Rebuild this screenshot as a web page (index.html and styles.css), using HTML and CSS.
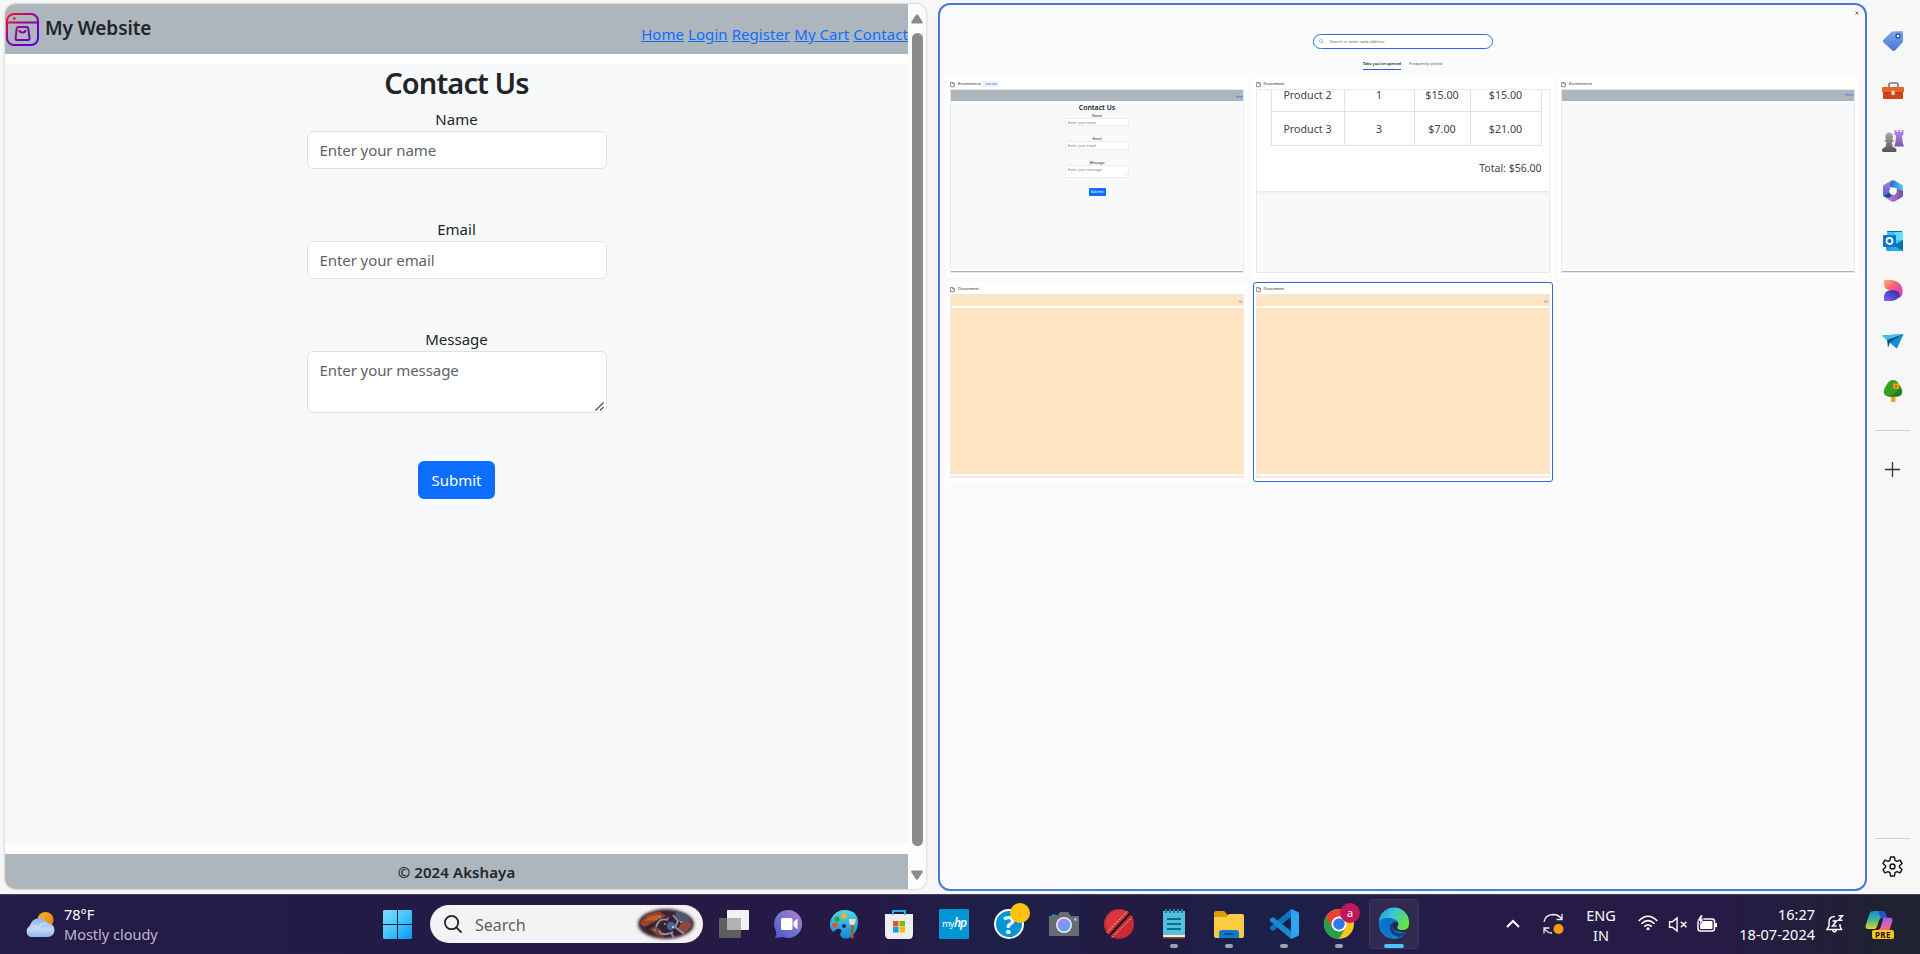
FILE: index.html
```html
<!DOCTYPE html>
<html lang="en">
<head>
<meta charset="utf-8">
<title>Ecommerce</title>
<link rel="stylesheet" href="styles.css">
</head>
<body>
<div class="browser">
  <section class="window">
    <div class="page">
      <header class="site-header">
        <div class="brand">
          <svg class="logo" viewBox="0 0 33 33" fill="none" stroke="url(#lg)" stroke-width="2">
            <defs><linearGradient id="lg" gradientUnits="userSpaceOnUse" x1="2" y1="2" x2="28" y2="30"><stop offset="0" stop-color="#ff1030"/><stop offset=".5" stop-color="#9000a0"/><stop offset="1" stop-color="#5000e0"/></linearGradient></defs>
            <rect x="1" y="1" width="31" height="31" rx="7"/><path d="M1 9.5h31.01M7 5.5h2.5"/><path d="M12.500 14h8q1.600 0 1.800 1.600l1.200 9.400q.2 2-1.700 2H11.300q-1.900 0-1.700-2l1.100-9.400Q11 14 12.500 14zM13.500 17q0 2.600 3 2.600t3-2.600"/>
          </svg>
          <span class="brand-name">My Website</span>
        </div>
        <nav class="links"><a>Home</a> <a>Login</a> <a>Register</a> <a>My Cart</a> <a>Contact</a></nav>
      </header>
      <main class="contact">
        <h2>Contact Us</h2>
        <label>Name</label>
        <div class="field">Enter your name</div>
        <label>Email</label>
        <div class="field">Enter your email</div>
        <label>Message</label>
        <div class="field area">Enter your message
          <svg class="grip" viewBox="0 0 10 10" stroke="#555" stroke-width="1.500"><path d="M.5 9.500l9-9M5.500 9.500l4-4"/></svg>
        </div>
        <button class="submit">Submit</button>
      </main>
      <footer class="site-footer">© 2024 Akshaya</footer>
    </div>
    <div class="scrollbar">
      <svg viewBox="0 0 12 10" fill="#8b8b8b"><path d="M5 .8q1-1.300 2 0l4.600 7q.8 1.700-.8 1.700H1.200q-1.600 0-.8-1.700z"/></svg>
      <div class="thumb"></div>
      <svg viewBox="0 0 12 10" fill="#8b8b8b"><path d="M5 9.200q1 1.300 2 0l4.600-7q.8-1.700-.8-1.700H1.200q-1.600 0-.8 1.700z"/></svg>
    </div>
  </section>

  <section class="picker">
    <div class="close"><svg viewBox="0 0 4 4" stroke="#555" stroke-width=".8"><path d="M.5.5l3 3M3.500.5l-3 3"/></svg></div>
    <div class="omnibox"><svg viewBox="0 0 5 5" fill="none" stroke="#777" stroke-width=".5"><circle cx="2" cy="2" r="1.600"/><path d="M3.200 3.200L4.700 4.700"/></svg>Search or enter web address</div>
    <div class="tabs"><span class="tab on">Tabs you've opened</span><span class="tab">Frequently visited</span></div>
    <div class="cards">
      <article class="card">
        <div class="cap"><svg class="doc" viewBox="0 0 5 5"><path d="M.6.4h2.200L4.400 2v2.700H.6zM2.800.4V2h1.600"/></svg>Ecommerce<span class="badge">Last tab</span></div>
        <div class="shot">
          <div class="s-head low">Hom</div>
          <div class="s-main">
            <b>Contact Us</b>
            <i>Name</i><p>Enter your name</p>
            <i>Email</i><p>Enter your email</p>
            <i>Message</i><p class="tall">Enter your message<svg viewBox="0 0 10 10" stroke="#777"><path d="M1 9l8-8M5 9l4-4"/></svg></p>
            <span class="s-btn">Submit</span>
          </div>
          <div class="s-foot"></div>
        </div>
      </article>
      <article class="card">
        <div class="cap"><svg class="doc" viewBox="0 0 5 5"><path d="M.6.4h2.200L4.400 2v2.700H.6zM2.800.4V2h1.600"/></svg>Document</div>
        <div class="shot cart">
          <div class="sheet">
            <div class="order">
              <span>Product 2</span><span>1</span><span>$15.00</span><span>$15.00</span>
              <span>Product 3</span><span>3</span><span>$7.00</span><span>$21.00</span>
            </div>
            <div class="total">Total: $56.00</div>
          </div>
        </div>
      </article>
      <article class="card">
        <div class="cap"><svg class="doc" viewBox="0 0 5 5"><path d="M.6.4h2.200L4.400 2v2.700H.6zM2.800.4V2h1.600"/></svg>Ecommerce</div>
        <div class="shot"><div class="s-head">Home</div><div class="s-main"></div><div class="s-foot"></div></div>
      </article>
      <article class="card">
        <div class="cap"><svg class="doc" viewBox="0 0 5 5"><path d="M.6.4h2.200L4.400 2v2.700H.6zM2.800.4V2h1.600"/></svg>Document</div>
        <div class="shot peach"><div class="s-head low">Ho</div><div class="s-main"></div><div class="s-foot"></div></div>
      </article>
      <article class="card selected">
        <div class="cap"><svg class="doc" viewBox="0 0 5 5"><path d="M.6.4h2.200L4.400 2v2.700H.6zM2.800.4V2h1.600"/></svg>Document</div>
        <div class="shot peach"><div class="s-head low">Ho</div><div class="s-main"></div><div class="s-foot"></div></div>
      </article>
    </div>
  </section>

  <aside class="sidebar">
    <svg class="app" viewBox="0 0 22 22"><defs><linearGradient id="tg" x1="0" y1="0" x2="0" y2="1"><stop offset="0" stop-color="#7fa8ef"/><stop offset="1" stop-color="#4672d2"/></linearGradient></defs><path d="M11 1.500L19.500 1q1.500 0 1.500 1.500V11q0 1-.8 1.800l-7 7.500q-1.500 1.500-3 0L1.500 12.500q-1.200-1.500 0-2.700L9 2.500q.8-1 2-1z" fill="url(#tg)"/><circle cx="16" cy="6" r="2" fill="#fff" stroke="#234a9f" stroke-width="1.300"/></svg>
    <svg class="app" viewBox="0 0 22 22"><path d="M7 8V5q0-2 2-2h5q2 0 2 2v3" fill="none" stroke="#777" stroke-width="1.600"/><rect x="1" y="8" width="20" height="11" rx="1" fill="#cd4518"/><path d="M0 8q0-1 1-1h20q1 0 1 1v4H0z" fill="#ec622c"/><path d="M1 12h20v1H1z" fill="#bd3c13"/><rect x="9.300" y="10.500" width="3.600" height="4.500" rx="1.500" fill="#d7d9da"/></svg>
    <svg class="app" viewBox="0 0 22 22"><defs><linearGradient id="pg" x1="0" y1="0" x2="0" y2="1"><stop offset="0" stop-color="#aaa"/><stop offset="1" stop-color="#555"/></linearGradient><linearGradient id="rk" x1="0" y1="0" x2="0" y2="1"><stop offset="0" stop-color="#bd8be9"/><stop offset="1" stop-color="#7d55b2"/></linearGradient></defs><path d="M12.500 0h2v2h1.500V0h2v2h1.500V0h2v4.500l-1.500 1.500.8 7 1.200 3.500h-10l1.300-3.500.8-7-1.600-1.500z" fill="url(#rk)"/><path d="M7 2.500a4 4 0 0 1 3 6.700q2 .6 2 2.300L9.800 12l1 5q3.700.8 3.700 3v.8q0 1.200-1.500 1.200H1.500Q0 22 0 20.500q0-2.800 3.500-3.500l1-5-2-.5q0-1.700 1.800-2.300A4 4 0 0 1 7 2.500z" fill="url(#pg)"/></svg>
    <svg class="app" viewBox="0 0 22 22"><defs><linearGradient id="m1" x1="0" y1="0" x2="0" y2="1"><stop offset="0" stop-color="#b07be0"/><stop offset="1" stop-color="#3f6fd6"/></linearGradient><linearGradient id="m2" x1="0" y1="0" x2="1" y2="0"><stop offset="0" stop-color="#2368c4"/><stop offset="1" stop-color="#4fd0fa"/></linearGradient><linearGradient id="m3" x1="0" y1="0" x2="1" y2="0"><stop offset="0" stop-color="#c293e8"/><stop offset="1" stop-color="#6f4fa0"/></linearGradient></defs><path d="M9 .8q2-1.200 4 0l6.500 3.700Q21 5.300 21 7v5l-7-4-6-1V4q0-2 1-3.200z" fill="url(#m2)"/><path d="M9 .8L2.500 4.500Q1 5.300 1 7v8q0 2 2 1.500L8 13V4q0-2 1-3.200z" fill="url(#m1)"/><path d="M21 11v4q0 1.700-1.500 2.500L13 21.200q-2 1.200-4 0L3 17.600q-1-.8 0-1l4 .4 7-4 1-4.500z" fill="url(#m3)"/><path d="M1.500 16.500L8 12l3 3-4 3z" fill="#2b3f9c"/><circle cx="11" cy="11.300" r="3.600" fill="#f7f7f7"/></svg>
    <svg class="app" viewBox="0 0 22 22"><rect x="5" y="1" width="15.500" height="13" rx="1" fill="#3bc5f3"/><path d="M5 2q0-1 1-1h13q1.500 0 1.500 1H5z" fill="#0b65b3"/><path d="M13 2h7.500v8H13z" fill="#62dcff"/><path d="M4 10h9v11H6q-2 0-2-2z" fill="#1d9cdf"/><path d="M21 10v10q0 1-1 1H7l4-6z" fill="#2aaaea"/><path d="M21 10v11l-9-5.500z" fill="#0c6db3"/><rect x="1" y="5" width="13" height="12" rx="1" fill="#0875cf"/><circle cx="7.500" cy="11" r="3" fill="none" stroke="#fff" stroke-width="1.800"/></svg>
    <svg class="app" viewBox="0 0 22 22"><defs><linearGradient id="dg" x1="0" y1="0" x2="1" y2="1"><stop offset="0" stop-color="#ffb45d"/><stop offset=".4" stop-color="#fa6175"/><stop offset="1" stop-color="#bd31f0"/></linearGradient><linearGradient id="db" x1="0" y1="1" x2="1" y2="0"><stop offset="0" stop-color="#7a6cf5"/><stop offset="1" stop-color="#2f2090"/></linearGradient></defs><path d="M2 0h6q6 0 10 4 4 5 2 11-1 2-3 3-5-8-10-8-5-1-5-6z" fill="url(#dg)"/><path d="M2 21v-5q1-6 8-6 7 0 8 6-3 5-10 5z" fill="url(#db)"/></svg>
    <svg class="app" viewBox="0 0 22 22"><path d="M0 5.500L21.500 4 14 18z" fill="#269ed8"/><path d="M5 9.500L21.500 4 8 12.500 6 17.500z" fill="#075084"/><path d="M8 12.500L21.500 4 15 18.500z" fill="#168bd3"/><path d="M0 5.500L21.500 4 5 10z" fill="#45bfe9"/></svg>
    <svg class="app" viewBox="0 0 22 22"><path d="M9 15h4.500v6q0 1-1 1H10q-1 0-1-1z" fill="#eda51f"/><path d="M11 0q4 0 6.500 5 5 7 1 10.500-2 1.200-7.500 1.200t-7.500-1.200Q-.5 12 4.500 5 7 0 11 0z" fill="#3c9f22"/><path d="M18.500 15.500q-2 1.200-7.500 1.200-4 0-6-.7 9-1 13-9.500 3.500 6 .5 9z" fill="#237e20"/><path d="M12 3l2 1 2-1 1.200 1.800L16.500 6l.7 2-1.700 1-1.700-.8-1.800.8-1.200-1.800.9-1.400L11 4.500z" fill="#f4ae13"/><circle cx="14" cy="6.200" r="1.200" fill="#df4610"/></svg>
    <hr class="rule">
    <svg class="plus" viewBox="0 0 15 15" stroke="#333" stroke-width="1.300"><path d="M7.500 0v15M0 7.500h15"/></svg>
    <hr class="rule end">
    <svg class="gear" viewBox="0 0 22 22" fill="none" stroke="#111" stroke-width="1.500"><path d="M9 1h4l.7 3.500 2 1.100 3.300-1.200 2 3.500-2.700 2.300v1.600l2.700 2.300-2 3.500-3.300-1.200-2 1.100L13 21H9l-.7-3.500-2-1.100L3 17.600l-2-3.500 2.700-2.300v-1.600L1 7.900l2-3.500 3.300 1.200 2-1.100z" stroke-linejoin="round"/><circle cx="11" cy="11" r="2.600"/></svg>
  </aside>
</div>

<div class="taskbar">
  <div class="weather">
    <svg viewBox="0 0 30 26"><defs><linearGradient id="sun" x1="0" y1="0" x2="1" y2="1"><stop offset="0" stop-color="#f5c31a"/><stop offset="1" stop-color="#f56b12"/></linearGradient><linearGradient id="cl" x1="0" y1="0" x2="0" y2="1"><stop offset="0" stop-color="#8bb1f2"/><stop offset=".6" stop-color="#c4d7f6"/><stop offset="1" stop-color="#8fb7f6"/></linearGradient></defs><circle cx="21" cy="8" r="8" fill="url(#sun)"/><path d="M6 25a6 6 0 0 1-.5-11q1.500-7 8.500-8 6 0 9 5 7 1 7 7-.5 7-7 7z" fill="url(#cl)"/><path d="M5 14q5-2 8 2 3-5 10-5" fill="none" stroke="#dbe7fb" stroke-width="1.500" opacity=".6"/></svg>
    <div class="w-text"><span>78°F</span><span class="dim">Mostly cloudy</span></div>
  </div>
  <svg class="start" viewBox="0 0 29 29"><defs><linearGradient id="win" x1="0" y1="0" x2="1" y2="1"><stop offset="0" stop-color="#83dcfc"/><stop offset=".5" stop-color="#42c5fb"/><stop offset="1" stop-color="#0798fb"/></linearGradient></defs><path d="M1 0h13v14H0V1zM15 0h13l1 1v13H15zM0 15h14v14H1l-1-1zM15 15h14v13l-1 1H15z" fill="url(#win)"/></svg>
  <div class="search">
    <svg class="lens" viewBox="0 0 19 19" fill="none" stroke="#222" stroke-width="1.900" stroke-linecap="round"><circle cx="8" cy="8" r="7"/><path d="M13 13l5 5"/></svg>
    <span>Search</span>
    <svg class="nebula" viewBox="0 0 60 34"><defs><filter id="soft"><feGaussianBlur stdDeviation="1.400"/></filter><filter id="sm"><feGaussianBlur stdDeviation=".7"/></filter></defs>
      <ellipse cx="30" cy="17" rx="28" ry="15" fill="#3b2130" filter="url(#soft)"/>
      <path d="M4 16Q10 5 24 5l6 4-10 5-12 6z" fill="#93462c" filter="url(#sm)"/><path d="M8 14q8-7 17-6l-4 5z" fill="#c75b2b" filter="url(#sm)"/>
      <path d="M40 4q10 2 15 10l-8 3-8-5z" fill="#4c586f" filter="url(#sm)"/><path d="M46 14q8-2 10 4l-8 10-6-6z" fill="#8a4a43" filter="url(#sm)"/><path d="M14 22q8-7 14 8l-8-2z" fill="#80452f" filter="url(#sm)"/>
      <path d="M20 20q3-10 12-7m-9 11q4 6 14 1m0-17l5 6-3 6 9 7M35 26l4 6" fill="none" stroke="#8f94a6" stroke-width="1.800" filter="url(#sm)"/><circle cx="35" cy="19" r="4" fill="#45679e" filter="url(#sm)"/>
      <g fill="#e5e5ed"><circle cx="29" cy="17" r=".8"/><circle cx="37" cy="20" r="1"/><circle cx="24" cy="10" r=".7"/><circle cx="45" cy="15" r=".8"/><circle cx="19" cy="23" r=".7"/><circle cx="32" cy="11" r=".7"/></g></svg>
  </div>
  <div class="apps">
    <div class="slot"><svg viewBox="0 0 30 30"><rect x="0" y="9" width="22" height="20" rx="1" fill="#5e5e5e"/><rect x="8" y="1" width="22" height="20" rx="1" fill="#f2f2f2"/><path d="M8 9h14v12H8z" fill="#b2b2b2"/></svg></div>
    <div class="slot"><svg viewBox="0 0 30 30"><defs><linearGradient id="ch" x1="0" y1="1" x2="1" y2="0"><stop offset="0" stop-color="#4e56cf"/><stop offset=".5" stop-color="#7375d4"/><stop offset="1" stop-color="#b37ec8"/></linearGradient></defs><path d="M15 1a14 14 0 1 1-6 27l-8 1q2-3 1-7A14 14 0 0 1 15 1z" fill="url(#ch)"/><rect x="7" y="9" width="11.500" height="12" rx="1.500" fill="#fff"/><path d="M19.500 13l4-3.500v11l-4-3.500z" fill="#fff"/></svg></div>
    <div class="slot"><svg viewBox="0 0 30 30"><defs><linearGradient id="pa" x1="0" y1="0" x2="0" y2="1"><stop offset="0" stop-color="#50d5ed"/><stop offset="1" stop-color="#118bd4"/></linearGradient></defs><path d="M17 1q12 1 12 13-1 11-9 15-8 2-9-4 3-4 0-5-3-1-7 3Q-1 18 2 10 7 0 17 1z" fill="url(#pa)"/><circle cx="15" cy="17" r="2" fill="#1d2554"/><circle cx="8" cy="10" r="2.600" fill="#35a22b"/><circle cx="15" cy="7" r="2.700" fill="#f6b714"/><circle cx="6" cy="16" r="2.600" fill="#e1542b"/><path d="M20 10h6.500q0 5-1.800 6h-3Q20 15 20 10z" fill="#f0dcc2"/><path d="M22 16h2.500v13q-1.200 1.500-2.500 0z" fill="#a65c1e"/></svg></div>
    <div class="slot"><svg viewBox="0 0 30 30"><path d="M9 7V2h12v5" fill="none" stroke="#25b1ee" stroke-width="2"/><path d="M1 5h28v20q0 5-4 5H5q-4 0-4-5z" fill="#eeeef0"/><path d="M9 6V2h12v4" fill="none" stroke="#25b1ee" stroke-width="1.600"/><path d="M9 12h5.500v5.500H9z" fill="#f25022"/><path d="M15.500 12H21v5.500h-5.500z" fill="#7fba00"/><path d="M9 18h5.500v5.500H9z" fill="#00a4ef"/><path d="M15.500 18H21v5.500h-5.500z" fill="#ffb900"/></svg></div>
    <div class="slot"><div class="myhp">my<em>hp</em></div></div>
    <div class="slot"><div class="help">?</div><div class="dot-badge"></div></div>
    <div class="slot"><svg viewBox="0 0 30 30"><defs><linearGradient id="le" x1="0" y1="0" x2="1" y2="1"><stop offset="0" stop-color="#c77af0"/><stop offset="1" stop-color="#33b5ef"/></linearGradient></defs><path d="M2 7l2-2 4 1v4H2z" fill="#148dc9"/><path d="M0 7h8l3-4h8l3 4h8v19q0 1-1 1H1q-1 0-1-1z" fill="#686d73"/><circle cx="15" cy="16" r="8" fill="#e8eaf0"/><circle cx="15" cy="16" r="6.500" fill="url(#le)"/><circle cx="26.500" cy="10.500" r="1.400" fill="#bbb"/></svg></div>
    <div class="slot"><svg viewBox="0 0 30 30"><circle cx="15" cy="15" r="15" fill="#c92a33"/><path d="M2 10Q6 2 15 1q5 0 8 2L5 23Q0 17 2 10z" fill="#d8383c"/><path d="M5.500 26.500L26 4.500" stroke="#181313" stroke-width="2"/><path d="M3 23.500L23.500 2.500M8 28.500L28.500 8" stroke="#f3dede" stroke-width=".9" stroke-dasharray="2 1.500"/></svg></div>
    <div class="slot run"><svg viewBox="0 0 30 30"><rect x="4" y="2" width="22" height="26" fill="#55bfda"/><path d="M4 26h22v2H4z" fill="#eee"/><path d="M4 28h22v1.500H4z" fill="#a2460f"/><path d="M8 10h14M8 15h14M8 20h14" stroke="#076d91" stroke-width="1.800"/><path d="M7 0v4m4-4v4m4-4v4m4-4v4m4-4v4" stroke="#167f9f" stroke-width="2"/></svg></div>
    <div class="slot run"><svg viewBox="0 0 30 30"><path d="M0 4q0-2 2-2h8l4 4v5H0z" fill="#dc9c08"/><path d="M0 8h12l3-3h13q2 0 2 2v20q0 2-2 2H2q-2 0-2-2z" fill="#fbcb43"/><path d="M5 29v-5q0-3 3-3h14q3 0 3 3v5z" fill="#1278cd"/><path d="M10 25h10" stroke="#084d92" stroke-width="2"/></svg></div>
    <div class="slot run"><svg viewBox="0 0 30 30"><path d="M22 0v8L4 22l-3-2q-1-1 0-2z" fill="#0877bd"/><path d="M22 30v-8L4 8 1 10q-1 1 0 2z" fill="#168bd0"/><path d="M22 0l7 3q1 .5 1 2v20q0 1.500-1 2l-7 3z" fill="#2da6ef"/></svg></div>
    <div class="slot run"><svg viewBox="0 0 30 30"><circle cx="15" cy="15" r="15" fill="#fcc31c"/><path d="M15 15L2 7.500A15 15 0 0 0 15 30l6.500-11.500z" fill="#299d4c"/><path d="M2 7.500A15 15 0 0 1 28 7.500H15l-6.500 11z" fill="#e94335"/><circle cx="15" cy="15" r="7.500" fill="#fff"/><circle cx="15" cy="15" r="5.800" fill="#3279e6"/></svg><div class="dot-badge user">a</div></div>
    <div class="slot run active"><svg viewBox="0 0 30 30"><defs><linearGradient id="e1" x1="0" y1="0" x2="1" y2=".6"><stop offset="0" stop-color="#258de0"/><stop offset=".45" stop-color="#39c6da"/><stop offset="1" stop-color="#64e73f"/></linearGradient></defs><path d="M15 0A15 15 0 0 0 15 30q8 0 12-7-4 2-8-2L28 9q-4-9-13-9z" fill="#1482d8"/><path d="M0 12A15 15 0 0 1 30 15q0 6-7 6-6 0-4-4 1-7-7-8-8-1-12 3z" fill="url(#e1)"/><path d="M11 16q-2 10 9 12 4-1 7-5-3 2-8 1-6-2-5-9-2-1-3 1z" fill="#123f80"/><path d="M13 14q3-3 6-1 1 3-1 5-1 4 9 3-6 3-10 1-4-3-4-8z" fill="#2a2950"/><path d="M1 17q-1-7 7-8 7 0 11 4-7-1-9 4-1 6 4 12-10-2-13-12z" fill="#0b72cc"/></svg></div>
  </div>
  <div class="tray">
    <svg class="chev" viewBox="0 0 14 8" fill="none" stroke="#fff" stroke-width="2"><path d="M1 7l6-6 6 6"/></svg>
    <svg class="sync" viewBox="0 0 21 22" fill="none" stroke="#eee" stroke-width="1.300"><path d="M1 9Q2 2 10 1.500q6 0 9 5M19 1v5.500h-5.500M9 20q-5 0-8-5M1 20.500V15h5.500"/><circle cx="15.500" cy="16" r="5" fill="#ff9a0a" stroke="none"/></svg>
    <div class="lang"><span>ENG</span><span>IN</span></div>
    <svg class="wifi" viewBox="0 0 20 16" fill="none" stroke="#fff" stroke-width="1.600"><path d="M.7 6q9.300-9.500 18.600 0M3.500 8.800q6.500-6.500 13 0M6.300 11.600q3.700-3.700 7.400 0"/><circle cx="10" cy="13.800" r="1.500" fill="#fff" stroke="none"/></svg>
    <svg class="mute" viewBox="0 0 20 16" fill="none" stroke="#fff" stroke-width="1.500"><path d="M1 5h3l5-4v14l-5-4H1zM13 5l6 6M19 5l-6 6"/></svg>
    <svg class="batt" viewBox="0 0 21 17"><rect x="1" y="4" width="16.500" height="12" rx="2.500" fill="none" stroke="#fff" stroke-width="1.500"/><rect x="3" y="6" width="12.500" height="8" rx="1" fill="#fff"/><path d="M18 8h2v4h-2z" fill="#fff"/><path d="M3.500 0L0 6h3l-1 5 5-7H4.500L6 0z" fill="#fff" stroke="#241a46" stroke-width=".6"/></svg>
    <div class="clock"><span>16:27</span><span>18-07-2024</span></div>
    <svg class="bell" viewBox="0 0 18 18" fill="none" stroke="#fff" stroke-width="1.500"><path d="M9 1.500Q3 1.500 3 7v4l-2 3.500h14.500L14 11V9M6.500 15q1.500 4 4 0M6.500 6h4l-4 5h4M12.500.8h4l-4 4.400h4"/></svg>
    <div class="copilot"><svg viewBox="0 0 28 20"><defs><linearGradient id="c1" x1="0" y1="0" x2="0" y2="1"><stop offset="0" stop-color="#1989e7"/><stop offset=".5" stop-color="#42b88d"/><stop offset="1" stop-color="#f2cf1f"/></linearGradient><linearGradient id="c2" x1="0" y1="0" x2="0" y2="1"><stop offset="0" stop-color="#a55af4"/><stop offset="1" stop-color="#f66d7b"/></linearGradient></defs><path d="M8 0h10q2 0 3 3l1 4h-5q-2 0-3 3l-2 6q-1 3-4 3H3q-4 0-3-4L4 3q1-3 4-3z" fill="url(#c1)"/><path d="M14 0h4q2 0 3 3l1 4h-5q-2 0-3-5z" fill="#2452ce"/><path d="M18 7h7q4 0 3 4l-3 9H12q3 0 4-4l2-6z" fill="url(#c2)"/></svg><span>PRE</span></div>
  </div>
</div>
</body>
</html>
```

FILE: styles.css
```css
* { box-sizing: border-box; }
body { margin: 0; width: 1920px; height: 954px; overflow: hidden; background: #f7f7f7; font: 15px/24px "Noto Sans", "Open Sans", sans-serif; color: #212529; display: flex; flex-direction: column; }
svg { display: block; flex: none; overflow: visible; }
.browser { height: 894px; flex: none; display: flex; padding-left: 5px; }

/* Left split: the contact page */
.window { width: 921px; height: 885px; margin-top: 4px; display: flex; border-radius: 10px; overflow: hidden; background: #fff; box-shadow: 0 0 3px rgba(0,0,0,.25); }
.page { width: 903px; display: flex; flex-direction: column; gap: 10px; }
.site-header { height: 50px; background: #adb5bd; display: flex; justify-content: space-between; }
.brand { display: flex; align-items: flex-start; padding: 9px 0 0 1px; }
.logo { width: 33px; height: 33px; }
.brand-name { font-size: 19px; font-weight: 600; line-height: 30px; margin-left: 6px; letter-spacing: -.1px; }
.links { padding-top: 18px; white-space: nowrap; letter-spacing: .06px; }
.links a { color: #0d6efd; text-decoration: underline; }
.contact { height: 780px; background: #f8f9fb; display: flex; flex-direction: column; align-items: center; }
.contact h2 { margin: 0 0 6px; height: 37px; font-size: 29px; line-height: 38px; font-weight: 600; letter-spacing: -.9px; }
.contact label { height: 24px; }
.field { width: 300px; height: 38px; margin-bottom: 48px; padding: 6px 12px; border: 1px solid #dee2e6; border-radius: 6px; background: #fff; color: #5d6369; letter-spacing: -.08px; }
.area { height: 62px; position: relative; }
.grip { position: absolute; right: 2px; bottom: 1px; width: 9px; height: 9px; }
.submit { width: 77px; height: 38px; padding: 0; border: 0; border-radius: 6px; background: #0d6efd; color: #fff; font: inherit; }
.site-footer { height: 35px; line-height: 36px; background: #adb5bd; text-align: center; font-weight: 600; letter-spacing: .1px; }
.scrollbar { width: 18px; background: #fcfcfc; display: flex; flex-direction: column; align-items: center; justify-content: space-between; padding: 10px 0 9px; }
.scrollbar svg { width: 12px; height: 10px; }
.thumb { width: 11px; height: 813px; border-radius: 6px; background: #8b8b8b; margin-bottom: 15px; }

/* Right split: tab picker */
.picker { width: 929px; height: 888px; margin: 3px 0 0 12px; border: 2px solid #4a76df; border-radius: 12px; background: #fbfbfb; display: flex; flex-direction: column; align-items: center; }
.close { align-self: flex-end; height: 29px; padding: 6px 6px 0 0; }
.close svg { width: 4px; height: 4px; }
.omnibox { width: 180px; height: 15px; border: 1px solid #2b6ee6; border-radius: 8px; background: #fff; display: flex; align-items: center; padding-left: 5px; gap: 6px; font-size: 4.100px; line-height: 6px; color: #666; }
.omnibox svg { width: 5px; height: 5px; }
.tabs { display: flex; gap: 8px; margin-top: 10px; height: 18px; font-size: 4px; line-height: 9px; color: #555; }
.tab { height: 11px; white-space: nowrap; }
.tab.on { color: #222; font-weight: 600; border-bottom: 1px solid #2862d9; }
.cards { display: grid; grid-template-columns: repeat(3, 300px); gap: 5px 5.500px; width: 913px; padding-left: 1px; }
.card { height: 200px; background: #fff; border-radius: 3px; padding: 3px; }
.card.selected { border: 1px solid #2f67df; padding: 2px; }
.cap { height: 9px; display: flex; align-items: center; gap: 3px; font-size: 4.200px; line-height: 6px; color: #222; padding-bottom: 1px; }
.doc { width: 5px; height: 5px; fill: none; stroke: #444; stroke-width: .6; }
.badge { background: #eef3fd; color: #365dd0; font-size: 3.100px; padding: 0 2px; margin-left: -1px; }
.shot { width: 294px; height: 184px; border: 1px solid #e7e9eb; background: #fff; display: flex; flex-direction: column; gap: 2px; overflow: hidden; }
.s-head { height: 11px; background: #adb5bd; text-align: right; font-size: 3.200px; line-height: 11px; color: #2370e8; flex: none; }
.s-head.low { line-height: 14px; }
.s-main { height: 166px; flex: none; background: #f8f9fa; display: flex; flex-direction: column; align-items: center; font-size: 3.600px; }
.s-main b { font-size: 6.900px; line-height: 9px; height: 9.500px; font-weight: 600; }
.s-main i { font-style: normal; line-height: 5px; height: 5px; }
.s-main p { margin: 0 0 10px; width: 64px; height: 8.500px; background: #fff; border: .5px solid #eee; border-radius: 1px; padding-left: 2px; line-height: 7px; color: #777; position: relative; }
.s-main p.tall { height: 13.500px; }
.s-main p svg { position: absolute; right: 1px; bottom: 1px; width: 2px; height: 2px; }
.s-btn { width: 17px; height: 8px; background: #0d6efd; color: #fff; border-radius: 1px; text-align: center; line-height: 8px; font-size: 3.800px; }
.s-foot { height: 1px; background: #adb5bd; flex: none; }
.peach .s-head, .peach .s-main { background: #ffe4c4; }
.peach .s-foot { background: #ffe9d0; }
.peach .s-head { color: #7d86a0; }
.cart { background: #f8f9fa; }
.sheet { height: 101px; flex: none; background: #fff; box-shadow: 0 1px 3px rgba(0,0,0,.1); padding: 0 7px 0 14px; }
.order { display: grid; grid-template-columns: 73px 70px 56px 71px; grid-template-rows: 22px 34px; border-left: 1px solid #dee2e6; width: 271px; font-size: 10.700px; color: #444; text-align: center; }
.order span { border-right: 1px solid #dee2e6; border-bottom: 1px solid #dee2e6; line-height: 34px; }
.order span:nth-child(-n+4) { line-height: 10px; }
.total { text-align: right; font-size: 10.500px; line-height: 44px; color: #444; }

/* Edge sidebar */
.sidebar { width: 51px; display: flex; flex-direction: column; align-items: center; padding-top: 30px; }
.app { width: 22px; height: 22px; margin-bottom: 28px; }
.rule { width: 35px; height: 1px; margin: 0; border: 0; background: #cfcfcf; flex: none; }
.plus { width: 15px; height: 15px; margin: 31px 0 361px -1px; }
.end { margin: 0; }
.gear { width: 21px; height: 21px; margin: 17px 0 0; }

/* Taskbar */
.taskbar { height: 60px; flex: none; display: flex; border-top: 1px solid #484360; background: linear-gradient(90deg, #241b48 0, #251a45 45%, #1d204a 53%, #241a43 59%, #1a2149 65%, #261b48 76%, #251b46 90%, #202132 98%); color: #fff; font-size: 14.500px; line-height: 20px; }
.weather { width: 383px; padding: 9px 0 0 24px; display: flex; }
.weather svg { width: 31px; height: 26px; margin-top: 8px; }
.w-text { margin-left: 9px; display: flex; flex-direction: column; }
.dim { color: #beb8cd; }
.start { width: 29px; height: 29px; margin-top: 15px; }
.search { width: 273px; height: 38px; margin: 10px 0 0 18px; border-radius: 19px; background: #f3f3f6; color: #606063; font-size: 16px; display: flex; align-items: center; padding-left: 14px; }
.lens { width: 18px; height: 18px; }
.search span { width: 161px; margin-left: 13px; padding-top: 1px; }
.nebula { width: 60px; height: 34px; }
.apps { display: flex; margin-left: 6px; }
.slot { width: 55px; height: 59px; padding: 14px 0 0 10px; position: relative; }
.slot > svg { width: 30px; height: 30px; }
.run::after { content: ""; position: absolute; left: 21px; top: 49px; width: 8px; height: 4px; border-radius: 2px; background: #a19fb0; }
.active { margin: 4px 0 0 0; height: 50px; width: 50px; padding-top: 10px; border-radius: 5px; background: #302a51; box-shadow: inset 0 0 0 1px #3c365b; }
.active::after { left: 15px; top: 45px; width: 20px; background: #4cc2ff; }
.myhp { width: 30px; height: 30px; background: #0096d6; font-size: 9px; line-height: 28px; text-align: center; letter-spacing: -.5px; border-radius: 1px; }
.myhp em { font-size: 12px; font-weight: 600; letter-spacing: -1px; }
.help { width: 30px; height: 30px; border: 2px solid #fff; border-radius: 50%; background: #0096d6; font-size: 25px; font-weight: 700; line-height: 26px; text-align: center; }
.dot-badge { position: absolute; left: 26px; top: 8px; width: 20px; height: 20px; border-radius: 50%; background: #ffc20e; }
.user { background: #c2185b; font-size: 11px; line-height: 19px; text-align: center; }
.tray { display: flex; align-items: flex-start; margin-left: 87px; }
.chev { width: 14px; height: 8px; margin-top: 25px; }
.sync { width: 21px; height: 22px; margin: 18px 0 0 23px; }
.lang { width: 30px; margin: 10px 0 0 22px; display: flex; flex-direction: column; text-align: center; }
.wifi { width: 20px; height: 16px; margin: 20px 0 0 22px; }
.mute { width: 20px; height: 15px; margin: 22px 0 0 10px; }
.batt { width: 21px; height: 17px; margin: 20px 0 0 9px; }
.clock { width: 97px; margin-top: 9px; display: flex; flex-direction: column; text-align: right; }
.bell { width: 18px; height: 18px; margin: 20px 0 0 11px; }
.copilot { width: 29px; margin: 16px 0 0 21px; display: flex; flex-direction: column; align-items: flex-end; }
.copilot svg { width: 28px; height: 19px; margin-right: 1px; }
.copilot span { width: 22px; height: 9px; border-radius: 2px; background: #fcc515; color: #111; font-size: 8px; line-height: 9px; font-weight: 700; text-align: center; letter-spacing: .5px; }
```
